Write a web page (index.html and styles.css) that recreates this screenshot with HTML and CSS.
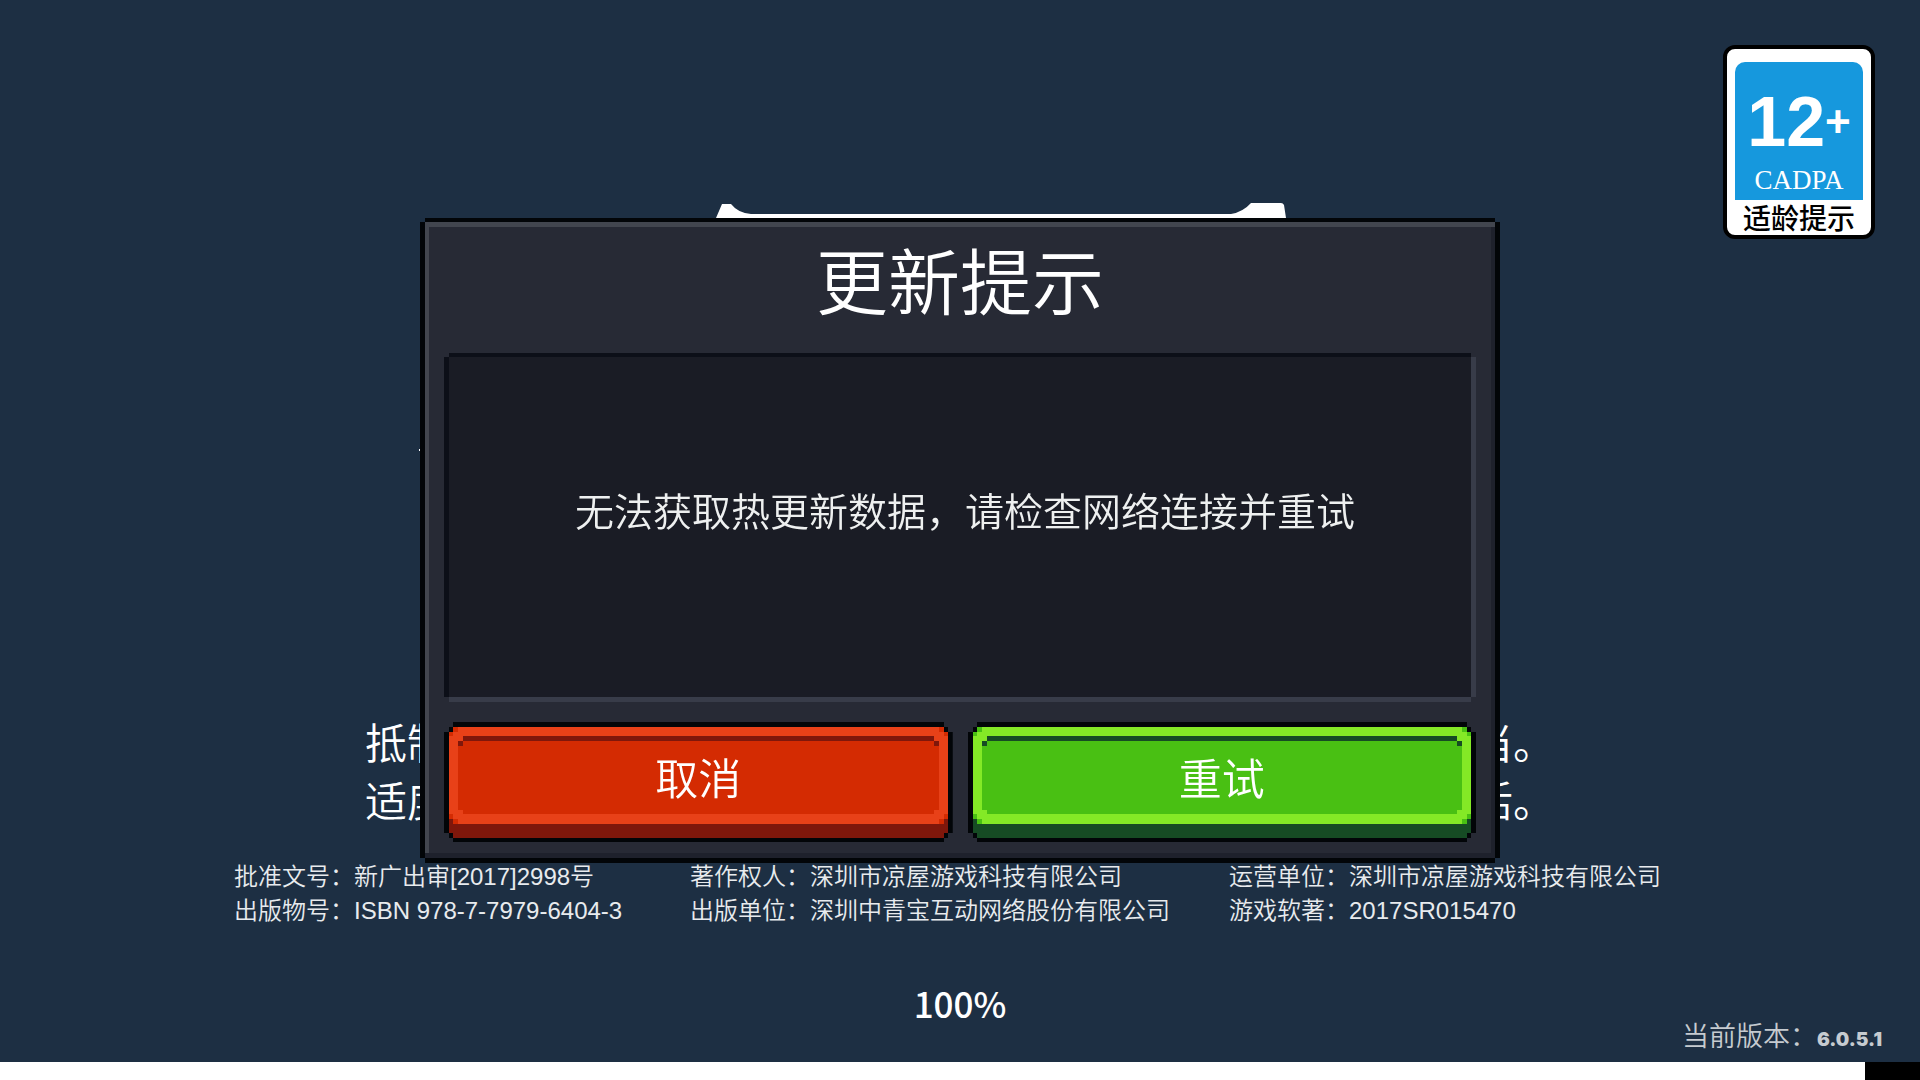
FILE: index.html
```html
<!DOCTYPE html>
<html lang="zh-CN">
<head>
<meta charset="utf-8">
<title>更新提示</title>
<link rel="stylesheet" href="styles.css">
</head>
<body>
<main class="scene">
  <svg class="logo" viewBox="0 0 1082 248" aria-hidden="true">
    <path d="M297 15 L303 1 H312 Q319 10 332 11 H812 Q824 9 832 0 L862 0 Q864 0 865 2 L867 15 Z"/>
    <rect x="0" y="246" width="2" height="2"/>
  </svg>

  <aside class="rating">
    <div class="rating-face">
      <div class="rating-age">12<span class="rating-plus">+</span></div>
      <div class="rating-org">CADPA</div>
    </div>
    <div class="rating-label">适龄提示</div>
  </aside>

  <section class="advice">
    <p class="advice-line"><span>抵制</span><span>当。</span></p>
    <p class="advice-line"><span>适度</span><span>活。</span></p>
  </section>

  <section class="legal">
    <p>批准文号：新广出审[2017]2998号</p>
    <p>著作权人：深圳市凉屋游戏科技有限公司</p>
    <p>运营单位：深圳市凉屋游戏科技有限公司</p>
    <p>出版物号：ISBN 978-7-7979-6404-3</p>
    <p>出版单位：深圳中青宝互动网络股份有限公司</p>
    <p>游戏软著：2017SR015470</p>
  </section>

  <footer class="status">
    <label class="percent" for="load">100%</label>
    <p class="version">当前版本：<span class="version-number">6.0.5.1</span></p>
    <progress class="load" id="load" max="1920" value="1865"></progress>
  </footer>
</main>

<div class="overlay">
  <div class="dialog" role="dialog" aria-labelledby="dialog-title" aria-describedby="dialog-text">
    <h1 class="dialog-title" id="dialog-title">更新提示</h1>
    <div class="well">
      <p id="dialog-text">无法获取热更新数据，请检查网络连接并重试</p>
    </div>
    <div class="actions">
      <button class="btn btn-cancel" type="button">取消</button>
      <button class="btn btn-retry" type="button">重试</button>
    </div>
  </div>
</div>
</body>
</html>
```
FILE: styles.css
```css
* {
  box-sizing: border-box;
}

body {
  margin: 0;
  background: #1d2f43;
  color: #fff;
  font-family: "Liberation Sans", "Noto Sans CJK SC", sans-serif;
  font-weight: 350;
}

h1,
p {
  margin: 0;
  font-weight: inherit;
}

.scene {
  position: relative;
  display: flex;
  flex-direction: column;
  min-height: 100vh;
  padding-top: 203px;
}

.logo {
  align-self: center;
  width: 1082px;
  max-width: 100%;
  fill: #fff;
}

/* Age rating badge */
.rating {
  position: absolute;
  top: 45px;
  right: 45px;
  width: 152px;
  padding: 13px 8px 1px;
  border: 4px solid #000;
  border-radius: 12px;
  background: #fff;
  text-align: center;
}

.rating-face {
  height: 138px;
  padding-top: 20px;
  border-radius: 10px 10px 0 0;
  background: #1698dd;
}

.rating-age {
  display: flex;
  align-items: center;
  justify-content: center;
  font: 700 70px/80px "Liberation Sans", sans-serif;
}

.rating-plus {
  font: 700 44px/44px "Liberation Sans", sans-serif;
}

.rating-org {
  font: 400 27px/36px "Liberation Serif", serif;
}

.rating-label {
  color: #000;
  font: 500 28px/34px "Noto Sans CJK SC", sans-serif;
}

/* Health notice */
.advice {
  align-self: center;
  width: 1190px;
  max-width: 100%;
  margin-top: auto;
  font-size: 42px;
  line-height: 58px;
}

.advice-line {
  display: flex;
  justify-content: space-between;
  white-space: nowrap;
}

.legal {
  display: grid;
  grid-template-columns: 456fr 539fr 457fr;
  margin-top: 28px;
  padding: 0 234px;
  color: #e8ebee;
  font-size: 24px;
  line-height: 34px;
  white-space: nowrap;
}

.status {
  display: flex;
  flex-direction: column;
  margin-top: 52px;
}

.percent {
  align-self: center;
  font: 500 35px/46px "Noto Sans CJK SC", sans-serif;
}

.version {
  align-self: flex-end;
  padding-right: 38px;
  color: #c6cbd0;
  font-size: 27px;
  line-height: 22px;
}

.version-number {
  font: 900 19px/22px Inter, sans-serif;
}

.load {
  appearance: none;
  display: block;
  width: 100%;
  height: 18px;
  margin-top: 11px;
  border: 0;
  background: #000;
}

.load::-webkit-progress-bar {
  background: #000;
}

.load::-webkit-progress-value {
  background: #fff;
}

/* Update dialog */
.overlay {
  position: fixed;
  inset: 0;
  display: flex;
  align-items: center;
  justify-content: center;
}

.dialog {
  width: 1070px;
  max-width: 96%;
  padding: 22px 24px 16px;
  background: #272a35;
  box-shadow:
    inset 0 5px #42464f,
    inset 0 -5px #1e212c,
    inset 4px 0 #42464f,
    inset -4px 0 #1e212c,
    0 -4px #020508,
    0 5px #020508,
    -5px 0 #020508,
    5px 0 #020508;
}

.dialog-title {
  font-size: 72px;
  line-height: 80px;
  text-align: center;
}

.well {
  display: flex;
  align-items: center;
  justify-content: center;
  min-height: 340px;
  margin-top: 33px;
  padding: 0 0 36px 10px;
  background: #1a1c25;
  box-shadow:
    0 -4px #0c0f18,
    -5px 0 #0c0f18,
    5px 0 #383c49,
    0 5px #383c49;
  color: #eef0f0;
  font-size: 39px;
}

.actions {
  display: grid;
  grid-template-columns: 1fr 1fr;
  gap: 15px;
  margin: 25px -5px 0;
}

.btn {
  --ink: linear-gradient(#020508, #020508);
  --rim: linear-gradient(var(--rim-color), var(--rim-color));
  --face: linear-gradient(var(--face-color), var(--face-color));
  --shade: linear-gradient(var(--shade-color), var(--shade-color));
  height: 120px;
  padding: 0 0 12px;
  border: 0;
  color: #fff;
  font: inherit;
  font-size: 43px;
  cursor: pointer;
  /* Top to bottom: groove, groove ends, face, rim corners, rim, lip, outline */
  background:
    var(--shade) 50% 14px / calc(100% - 38px) 5px,
    var(--shade) left 14px top 19px / 5px 5px,
    var(--shade) right 14px top 19px / 5px 5px,
    var(--rim) left 14px top 14px / 5px 5px,
    var(--rim) right 14px top 14px / 5px 5px,
    var(--rim) left 14px top 88px / 5px 4px,
    var(--rim) right 14px top 88px / 5px 4px,
    var(--face) 50% 14px / calc(100% - 28px) 78px,
    var(--face) left 5px top 10px / 4px 4px,
    var(--face) right 5px top 10px / 4px 4px,
    var(--face) left 9px top 5px / 5px 5px,
    var(--face) right 9px top 5px / 5px 5px,
    var(--face) left 5px top 92px / 4px 5px,
    var(--face) right 5px top 92px / 4px 5px,
    var(--face) left 9px top 97px / 5px 5px,
    var(--face) right 9px top 97px / 5px 5px,
    var(--rim) 50% 5px / calc(100% - 18px) 97px,
    var(--rim) 50% 10px / calc(100% - 10px) 87px,
    var(--shade) 50% 102px / calc(100% - 18px) 14px,
    var(--shade) 50% 97px / calc(100% - 10px) 14px,
    var(--ink) 50% 0 / calc(100% - 18px) 120px,
    var(--ink) 50% 5px / calc(100% - 10px) 111px,
    var(--ink) 50% 10px / 100% 101px;
  background-repeat: no-repeat;
}

.btn-cancel {
  --rim-color: #e84118;
  --face-color: #d42b02;
  --shade-color: #7f170b;
}

.btn-retry {
  --rim-color: #84e926;
  --face-color: #49c013;
  --shade-color: #164b24;
}
```
